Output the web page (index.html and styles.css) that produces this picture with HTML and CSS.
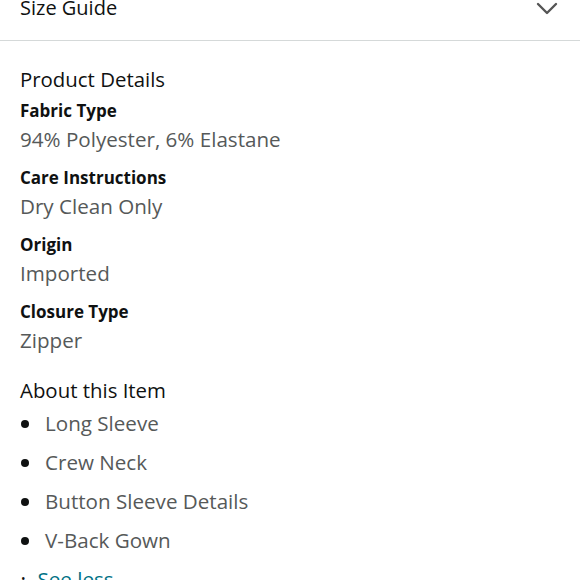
FILE: index.html
```html
<!DOCTYPE html>
<html>
<head>
<meta charset="utf-8">
<link rel="stylesheet" href="styles.css">
</head>
<body>
<div class="page">
  <div class="size-guide">
    <span class="sg-title">Size Guide</span>
    <svg class="chev" width="22" height="14" viewBox="0 0 22 14"><path d="M2 2 L11 11 L20 2" fill="none" stroke="#555" stroke-width="2.4" stroke-linecap="round" stroke-linejoin="round"/></svg>
  </div>
  <div class="content">
    <h2 class="section-title">Product Details</h2>
    <div class="detail">
      <div class="label">Fabric Type</div>
      <div class="value">94% Polyester, 6% Elastane</div>
    </div>
    <div class="detail">
      <div class="label">Care Instructions</div>
      <div class="value">Dry Clean Only</div>
    </div>
    <div class="detail">
      <div class="label">Origin</div>
      <div class="value">Imported</div>
    </div>
    <div class="detail">
      <div class="label">Closure Type</div>
      <div class="value">Zipper</div>
    </div>
    <h2 class="section-title about">About this Item</h2>
    <ul class="bullets">
      <li>Long Sleeve</li>
      <li>Crew Neck</li>
      <li>Button Sleeve Details</li>
      <li>V-Back Gown</li>
    </ul>
    <div class="see-less"><span class="dot">•</span><span class="link">See less</span></div>
  </div>
</div>
</body>
</html>
```

FILE: styles.css
```css
html, body {
  margin: 0;
  padding: 0;
  background: #fff;
}
body {
  font-family: "Open Sans", "Noto Sans", sans-serif;
  color: #0f1111;
  overflow: hidden;
}
.page {
  width: 580px;
}
.size-guide {
  display: flex;
  align-items: center;
  justify-content: space-between;
  height: 52px;
  margin-top: -12px;
  padding: 0 22px 0 20px;
  border-bottom: 1px solid #d5d9d9;
}
.sg-title {
  font-size: 20px;
  line-height: 28px;
  margin-top: -12px;
}
.chev {
  margin-top: -11px;
}
.content {
  padding: 0 20px;
}
.section-title {
  font-size: 20.4px;
  font-weight: 400;
  margin: 0;
  line-height: 28px;
  padding-top: 24px;
}
.detail {
  margin-top: 4px;
}
.detail + .detail {
  margin-top: 11px;
}
.label {
  font-size: 17px;
  font-weight: 700;
  line-height: 28px;
}
.value {
  font-size: 20.6px;
  line-height: 28px;
  color: #565959;
}
.about {
  padding-top: 22px;
}
.bullets {
  list-style: none;
  margin: 0;
  padding: 0;
}
.bullets li {
  position: relative;
  padding-left: 25px;
  font-size: 20.6px;
  line-height: 28px;
  color: #565959;
  margin-top: 11px;
}
.bullets li:first-child {
  margin-top: 5px;
}
.bullets li::before {
  content: "";
  position: absolute;
  left: 1px;
  top: 11px;
  width: 8px;
  height: 8px;
  border-radius: 50%;
  background: #0f1111;
}
.see-less {
  margin-top: 11px;
  font-size: 20.6px;
  line-height: 28px;
  display: flex;
  gap: 12px;
}
.see-less .dot {
  font-size: 12px;
  padding-left: 1px;
}
.link {
  color: #007185;
}
```
